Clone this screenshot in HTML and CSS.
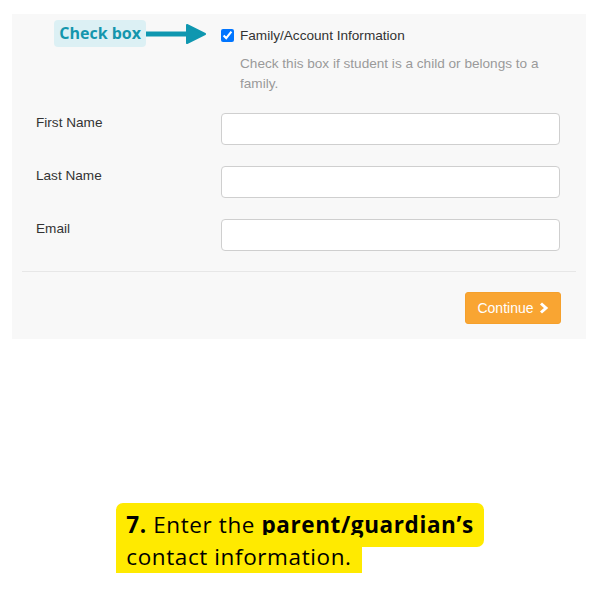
FILE: index.html
```html
<!DOCTYPE html>
<html>
<head>
<meta charset="utf-8">
<link rel="stylesheet" href="styles.css">
</head>
<body>
<div class="panel">
  <div class="grid">
    <div class="callout-cell">
      <span class="callout">Check box</span>
      <svg class="arrow" width="60" height="22" viewBox="0 0 60 22"><rect x="0" y="8.5" width="44" height="5" fill="#0f97b0"/><path d="M41 2 L59 11 L41 20 Z" fill="#0f97b0" stroke="#0f97b0" stroke-width="2" stroke-linejoin="round"/></svg>
    </div>
    <label class="check"><input type="checkbox" checked> Family/Account Information</label>
    <div></div>
    <p class="help">Check this box if student is a child or belongs to a family.</p>
    <div class="label">First Name</div>
    <input class="field" type="text">
    <div class="label">Last Name</div>
    <input class="field" type="text">
    <div class="label">Email</div>
    <input class="field" type="text">
  </div>
  <div class="footer">
    <button class="btn">Continue <svg width="10" height="12" viewBox="0 0 10 12"><path d="M2 1.5 L7 6 L2 10.5" fill="none" stroke="#fff" stroke-width="3"/></svg></button>
  </div>
</div>
<div class="caption-wrap">
  <p class="caption"><span><b>7.</b> Enter the <b>parent/guardian’s</b><br>contact information.</span></p>
</div>
</body>
</html>
```
FILE: styles.css
```css
body {
  margin: 0;
  background: #fff;
  font-family: "Liberation Sans", Arial, sans-serif;
}
.panel {
  margin: 14px 14px 0 12px;
  background: #f8f8f8;
  padding: 6px 10px 15px;
}
.grid {
  display: grid;
  grid-template-columns: 199px 339px;
  column-gap: 0;
  align-items: start;
}
.callout-cell {
  display: flex;
  align-items: center;
  justify-content: flex-end;
  padding-right: 15px;
  height: 27px;
}
.callout {
  background: #dcf0f4;
  color: #1496ad;
  font-family: "Open Sans", sans-serif;
  font-weight: 700;
  font-size: 16px;
  line-height: 27px;
  padding: 0 5px;
  border-radius: 4px;
}
.arrow {
  display: block;
  margin-left: 0;
}
.check {
  display: flex;
  align-items: center;
  height: 27px;
  margin-top: 2px;
  font-size: 13.6px;
  color: #333;
}
.check input {
  margin: 0 6px 0 0;
  width: 13px;
  height: 13px;
}
.help {
  margin: 5px 0 19px 19px;
  font-size: 13.6px;
  line-height: 20px;
  color: #9a9a9a;
  width: 320px;
}
.label {
  font-size: 13.6px;
  line-height: 20px;
  color: #333;
  padding-left: 14px;
}
.field {
  box-sizing: border-box;
  height: 32px;
  width: 339px;
  border: 1px solid #cfcfcf;
  border-radius: 4px;
  background: #fff;
  margin: 0 0 21px;
}
.grid .field:last-child {
  margin-bottom: 0;
}
.footer {
  border-top: 1px solid #e7e7e7;
  margin-top: 20px;
  padding-top: 20px;
  display: flex;
  justify-content: flex-end;
  padding-right: 15px;
}
.btn {
  width: 96px;
  height: 32px;
  background: #f9a532;
  border: 1px solid #f5a02c;
  border-radius: 3px;
  color: #fff;
  font-family: "Liberation Sans", Arial, sans-serif;
  font-size: 14px;
  display: flex;
  align-items: center;
  justify-content: center;
  gap: 5px;
  padding: 0;
}
.caption-wrap {
  margin-top: 170px;
  display: flex;
  justify-content: center;
}
.caption {
  margin: 0;
  font-family: "Open Sans", sans-serif;
  font-size: 22.5px;
  letter-spacing: 0.6px;
  line-height: 32px;
  color: #000;
}
.caption span {
  background: #ffea00;
  padding: 6px 10px 7px;
  border-radius: 7px;
  -webkit-box-decoration-break: clone;
  box-decoration-break: clone;
}
.caption b {
  font-weight: 700;
}
```
